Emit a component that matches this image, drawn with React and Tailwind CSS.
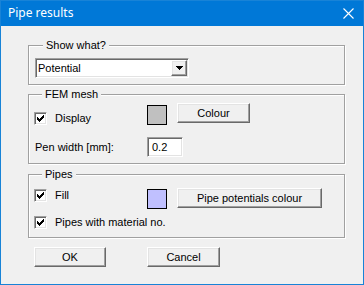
const raised =
  'border border-t-white border-l-white border-r-[#696969] border-b-[#696969] shadow-[inset_-1px_-1px_0_#a0a0a0,inset_1px_1px_0_#e3e3e3] bg-[#f0f0f0]';
const sunken =
  'border border-t-[#a0a0a0] border-l-[#a0a0a0] border-r-white border-b-white shadow-[inset_1px_1px_0_#696969,inset_-1px_-1px_0_#e3e3e3] bg-white';
const group =
  'w-[317px] ml-[27px] border border-[#a0a0a0] shadow-[1px_1px_0_#fff,inset_1px_1px_0_#fff]';
const legend = 'ml-[8px] px-[3px] leading-[13px] bg-[#f0f0f0]';

const Check = () => (
  <div className={`w-[13px] h-[13px] flex items-center justify-center ${sunken}`}>
    <svg width="7" height="7" viewBox="0 0 7 7" shapeRendering="crispEdges">
      <polygon points="0,2 2,4 7,-1 7,2 2,7 0,5" fill="#000" />
    </svg>
  </div>
);

const Button = ({ children, className = '' }) => (
  <div className={`h-[20px] flex items-center justify-center ${raised} ${className}`}>
    {children}
  </div>
);

export default function App() {
  return (
    <div
      className="w-[364px] h-[285px] border border-[#1883d7] bg-[#f0f0f0] text-[11px] text-black"
      style={{ fontFamily: '"Liberation Sans", Arial, sans-serif' }}
    >
      <div
        className="h-[25px] bg-[#0078d7] flex items-center justify-between pl-[7px] pr-[9px] text-white text-[12px]"
        style={{ fontFamily: '"Noto Sans", "Open Sans", sans-serif' }}
      >
        <span className="-mt-[1px]">Pipe results</span>
        <svg width="11" height="11" viewBox="0 0 11 11">
          <path d="M0.5 0.5 L10.5 10.5 M10.5 0.5 L0.5 10.5" stroke="#fff" strokeWidth="1.1" />
        </svg>
      </div>

      <fieldset className={`${group} mt-[13px] pl-[6px] pt-[6px] pb-[6px]`}>
        <legend className={legend}>Show what?</legend>
        <div className={`w-[154px] h-[20px] flex items-center pr-[1px] ${sunken}`}>
          <span className="flex-1 pl-[2px] leading-[13px]">Potential</span>
          <div className={`w-[16px] h-[16px] flex items-center justify-center ${raised}`}>
            <svg width="7" height="4" viewBox="0 0 7 4" shapeRendering="crispEdges">
              <polygon points="0,0 7,0 3.5,4" fill="#000" />
            </svg>
          </div>
        </div>
      </fieldset>

      <fieldset className={`${group} mt-[3px] pl-[5px] pt-[2px] pb-[6px]`}>
        <legend className={legend}>FEM mesh</legend>
        <div className="flex h-[22px]">
          <div className="w-[113px] flex items-center gap-[8px] mt-[9px] self-start">
            <Check />
            <span className="leading-[13px]">Display</span>
          </div>
          <div className="w-[20px] h-[20px] mt-[2px] border border-black bg-[#c0c0c0]" />
          <Button className="ml-[10px] w-[73px] h-[19px]">Colour</Button>
        </div>
        <div className="flex items-center mt-[12px]">
          <span className="w-[113px] pl-[1px] leading-[13px]">Pen width [mm]:</span>
          <div className={`w-[36px] h-[20px] flex items-center pl-[4px] ${sunken}`}>0.2</div>
        </div>
      </fieldset>

      <fieldset className={`${group} mt-[4px] pl-[5px] pt-[7px] pb-[8px]`}>
        <legend className={legend}>Pipes</legend>
        <div className="flex h-[20px]">
          <div className="w-[113px] flex items-start gap-[8px] mt-[1px]">
            <Check />
            <span className="leading-[13px]">Fill</span>
          </div>
          <div className="w-[20px] h-[20px] mt-[1px] border border-black bg-[#c0c0ff]" />
          <Button className="ml-[10px] w-[145px]">Pipe potentials colour</Button>
        </div>
        <div className="flex items-center gap-[8px] mt-[8px]">
          <Check />
          <span className="leading-[13px]">Pipes with material no.</span>
        </div>
      </fieldset>

      <div className="flex mt-[9px] ml-[33px]">
        <Button className="w-[72px]">OK</Button>
        <Button className="w-[73px] ml-[41px]">Cancel</Button>
      </div>
    </div>
  );
}
